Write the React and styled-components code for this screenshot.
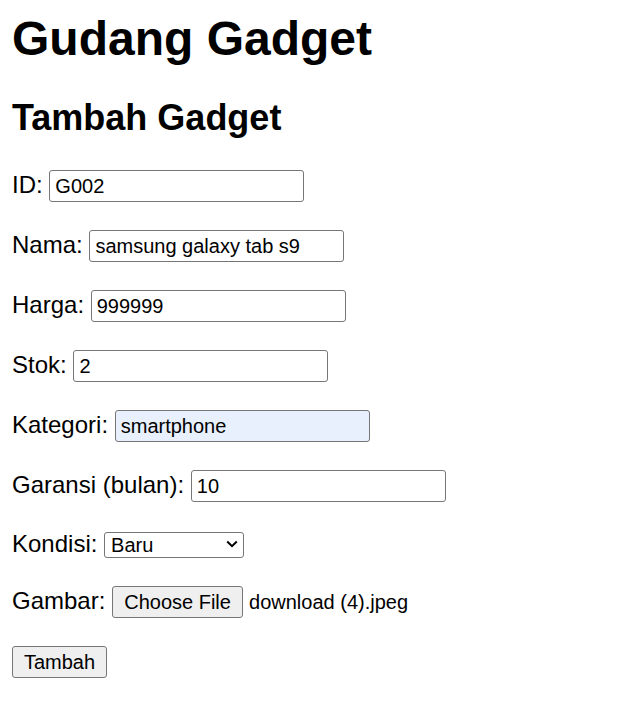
import React from "react";
import styled, { createGlobalStyle } from "styled-components";

const GlobalStyle = createGlobalStyle`
  html, body {
    margin: 0;
    padding: 0;
    background: #ffffff;
  }
  body {
    font-family: "Liberation Sans", Arial, sans-serif;
    color: #000000;
  }
`;

const Page = styled.div`
  padding: 11px 12px 0;
`;

const Title = styled.h1`
  margin: 0;
  font-size: 48px;
  line-height: 56px;
  font-weight: bold;
`;

const Subtitle = styled.h2`
  margin: 30px 0 31px;
  font-size: 36px;
  line-height: 42px;
  font-weight: bold;
`;

const Form = styled.form`
  margin: 0;
`;

const Row = styled.div`
  font-size: 24px;
  margin: 0 0 28px;
  white-space: nowrap;
`;

const TextInput = styled.input`
  box-sizing: border-box;
  width: 255px;
  height: 32px;
  padding: 0 5px;
  border: 1px solid #767676;
  border-radius: 3px;
  font-family: "Liberation Sans", Arial, sans-serif;
  font-size: 20px;
  color: #000;
  background: ${(p) => (p.$filled ? "#e8f0fe" : "#ffffff")};
  outline: none;
  vertical-align: baseline;
`;

const SelectWrap = styled.span`
  position: relative;
  display: inline-block;
`;

const Select = styled.select`
  box-sizing: border-box;
  width: 140px;
  height: 26px;
  border: 1px solid #767676;
  border-radius: 3px;
  font-family: "Liberation Sans", Arial, sans-serif;
  font-size: 20px;
  color: #000;
  background: #fff;
  padding: 0 0 0 6px;
  appearance: none;
  -webkit-appearance: none;
`;

const Chevron = styled.svg`
  position: absolute;
  right: 6px;
  top: 50%;
  margin-top: -4px;
  width: 12px;
  height: 8px;
  pointer-events: none;
`;

const Button = styled.button`
  box-sizing: border-box;
  height: 32px;
  width: ${(p) => p.$w}px;
  padding: 0;
  border: 1px solid #767676;
  border-radius: 3px;
  background: #efefef;
  font-family: "Liberation Sans", Arial, sans-serif;
  font-size: 20px;
  color: #000;
`;

const FileName = styled.span`
  font-size: 20px;
  margin-left: 6px;
`;

const fields = [
  { label: "ID", value: "G002" },
  { label: "Nama", value: "samsung galaxy tab s9" },
  { label: "Harga", value: "999999" },
  { label: "Stok", value: "2" },
  { label: "Kategori", value: "smartphone", filled: true },
  { label: "Garansi (bulan)", value: "10" },
];

export default function App() {
  return (
    <>
      <GlobalStyle />
      <Page>
        <Title>Gudang Gadget</Title>
        <Subtitle>Tambah Gadget</Subtitle>
        <Form onSubmit={(e) => e.preventDefault()}>
          {fields.map((f) => (
            <Row key={f.label}>
              <label>{f.label}:</label>{" "}
              <TextInput type="text" defaultValue={f.value} $filled={f.filled} />
            </Row>
          ))}
          <Row>
            <label>Kondisi:</label>{" "}
            <SelectWrap>
              <Select defaultValue="Baru">
                <option value="Baru">Baru</option>
                <option value="Bekas">Bekas</option>
              </Select>
              <Chevron viewBox="0 0 12 8">
                <path d="M1.2 1.5 L6 6.2 L10.8 1.5" fill="none" stroke="#000" strokeWidth="2" />
              </Chevron>
            </SelectWrap>
          </Row>
          <Row>
            <label>Gambar:</label>{" "}
            <Button type="button" $w={131}>Choose File</Button>
            <FileName>download (4).jpeg</FileName>
          </Row>
          <Row>
            <Button type="submit" $w={95}>Tambah</Button>
          </Row>
        </Form>
      </Page>
    </>
  );
}
